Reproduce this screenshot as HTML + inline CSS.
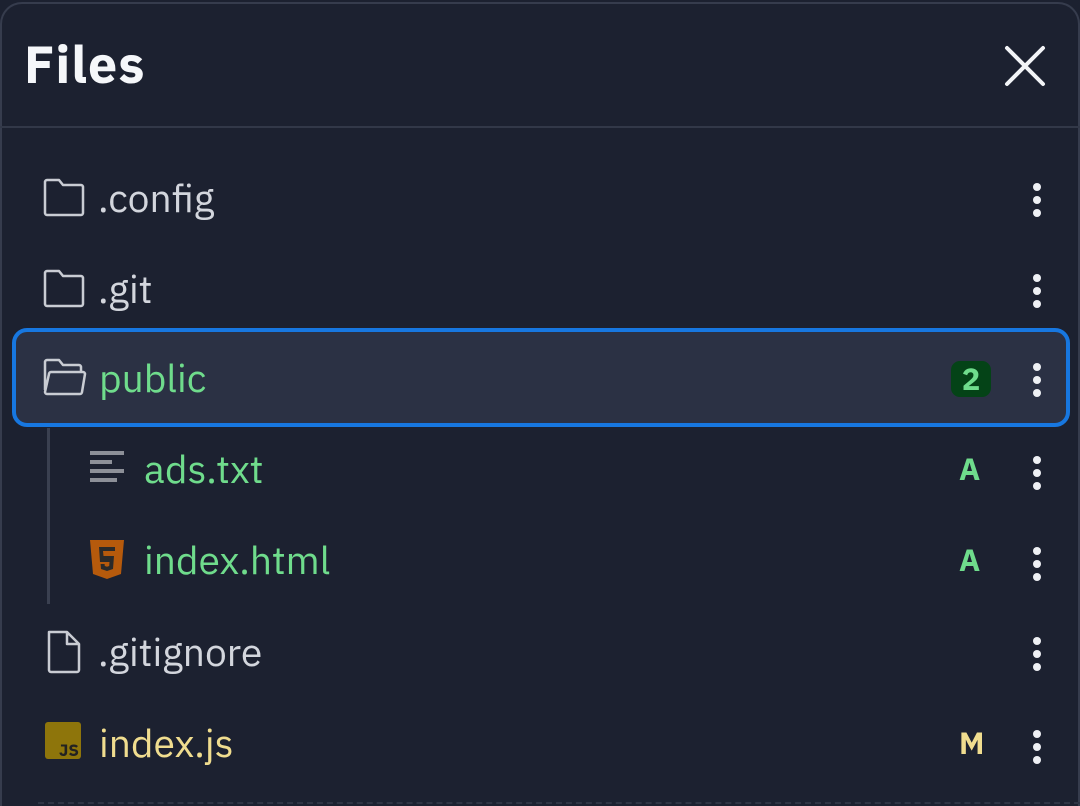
<!DOCTYPE html>
<html><head><style>
html,body{margin:0;padding:0;width:1080px;height:806px;overflow:hidden;background:#1c2130;font-family:"IBM Plex Sans","Liberation Sans",sans-serif;position:relative;}
.panel{position:absolute;left:0;top:2px;width:1080px;height:804px;border:2px solid #363c4d;border-bottom:none;border-radius:22px 22px 0 0;background:#1c2130;box-sizing:border-box;}
.title{position:absolute;left:24px;top:35px;font-size:52px;font-weight:bold;color:#f5f7fa;line-height:60px;letter-spacing:1px;}
.hr{position:absolute;left:0;top:126px;width:1080px;height:2px;background:#323848;}
.row{position:absolute;left:0;width:1080px;height:90px;}
.name{position:absolute;top:0;line-height:90px;font-size:39px;}
.ico{position:absolute;}
.dots{position:absolute;left:1033px;width:10px;}
.dots i{display:block;width:8px;height:8px;border-radius:50%;background:#eef0f4;margin:0 0 5px 0;}
.st{position:absolute;left:959px;font-size:31px;font-weight:bold;line-height:90px;top:0;}
.sel{position:absolute;left:12px;top:328px;width:1058px;height:99px;box-sizing:border-box;border:4px solid #1777e0;border-radius:15px;background:#2b3144;}
.vline{position:absolute;left:47px;top:428px;width:3px;height:176px;background:#3a4050;}
.dash{position:absolute;left:38px;top:802px;width:1042px;border-top:2px dashed #2e3444;}
</style></head><body>
<div class="panel"></div>
<div class="title">Files</div>
<svg style="position:absolute;left:1004px;top:45px" width="42" height="42" viewBox="0 0 42 42"><path d="M3 3L39 39M39 3L3 39" stroke="#f2f4f7" stroke-width="4" stroke-linecap="round"/></svg>
<div class="hr"></div>
<div class="sel"></div>
<div class="vline"></div>

<div class="row" style="top:153px">
<svg class="ico" style="left:43px;top:25px" width="42" height="40" viewBox="0 0 42 40"><path d="M2 4a2 2 0 0 1 2-2h12l4 5h18a2 2 0 0 1 2 2v26a2 2 0 0 1-2 2H4a2 2 0 0 1-2-2z" fill="none" stroke="#c9ccd3" stroke-width="2.5" stroke-linejoin="round"/></svg>
<div class="name" style="left:98px;color:#d3d6dd">.config</div>
<div class="dots" style="top:30px"><i></i><i></i><i></i></div>
</div>
<div class="row" style="top:244px">
<svg class="ico" style="left:43px;top:25px" width="42" height="40" viewBox="0 0 42 40"><path d="M2 4a2 2 0 0 1 2-2h12l4 5h18a2 2 0 0 1 2 2v26a2 2 0 0 1-2 2H4a2 2 0 0 1-2-2z" fill="none" stroke="#c9ccd3" stroke-width="2.5" stroke-linejoin="round"/></svg>
<div class="name" style="left:98px;color:#d3d6dd">.git</div>
<div class="dots" style="top:30px"><i></i><i></i><i></i></div>
</div>
<div class="row" style="top:333px">
<svg class="ico" style="left:43px;top:25px" width="44" height="40" viewBox="0 0 44 40"><path d="M2 32V4a2 2 0 0 1 2-2h12l4 5h16a2 2 0 0 1 2 2v5M4 36a2 2 0 0 1-2-2l4-18a2 2 0 0 1 2-2h32a2 2 0 0 1 2 2l-3 18a2 2 0 0 1-2 2z" fill="none" stroke="#c9ccd3" stroke-width="2.5" stroke-linejoin="round"/></svg>
<div class="name" style="left:99px;color:#6fdc8c">public</div>
<div style="position:absolute;left:951px;top:28px;width:40px;height:36px;border-radius:9px;background:#044317;color:#6fdc8c;font-size:31px;font-weight:bold;text-align:center;line-height:36px">2</div>
<div class="dots" style="top:30px"><i></i><i></i><i></i></div>
</div>
<div class="row" style="top:424px">
<svg class="ico" style="left:90px;top:27px" width="36" height="34" viewBox="0 0 36 34"><g fill="#8d9098"><rect x="0" y="0" width="34" height="4"/><rect x="0" y="9" width="22" height="4"/><rect x="0" y="18" width="34" height="4"/><rect x="0" y="27" width="27" height="4"/></g></svg>
<div class="name" style="left:144px;color:#6fdc8c">ads.txt</div>
<div class="st" style="color:#6fdc8c">A</div>
<div class="dots" style="top:32px"><i></i><i></i><i></i></div>
</div>
<div class="row" style="top:515px">
<svg class="ico" style="left:90px;top:25px" width="34" height="40" viewBox="0 0 34 40"><path d="M0 0h34l-3 34-14 5-14-5z" fill="#b65a0c"/><path d="M9 7h16v4H13l.5 5H24l-1 13-6 2-6-2-.4-5h4l.2 2 2.2.7 2.2-.7.3-4H10z" fill="#2a2a2a"/></svg>
<div class="name" style="left:144px;color:#6fdc8c">index.html</div>
<div class="st" style="color:#6fdc8c">A</div>
<div class="dots" style="top:32px"><i></i><i></i><i></i></div>
</div>
<div class="row" style="top:607px">
<svg class="ico" style="left:46px;top:23px" width="36" height="44" viewBox="0 0 36 44"><path d="M3 2h18l12 12v26a2 2 0 0 1-2 2H5a2 2 0 0 1-2-2z M21 2v12h12" fill="none" stroke="#c9ccd3" stroke-width="2.5" stroke-linejoin="round"/></svg>
<div class="name" style="left:98px;color:#d3d6dd">.gitignore</div>
<div class="dots" style="top:30px"><i></i><i></i><i></i></div>
</div>
<div class="row" style="top:698px">
<div style="position:absolute;left:45px;top:24px;width:36px;height:37px;border-radius:3px;background:#8e750b;"><span style="position:absolute;right:2px;bottom:0;font-size:17px;font-weight:bold;color:#222;line-height:18px">JS</span></div>
<div class="name" style="left:99px;color:#f0dd8f">index.js</div>
<div class="st" style="color:#f0dd8f">M</div>
<div class="dots" style="top:32px"><i></i><i></i><i></i></div>
</div>
<div class="dash"></div>
</body></html>
